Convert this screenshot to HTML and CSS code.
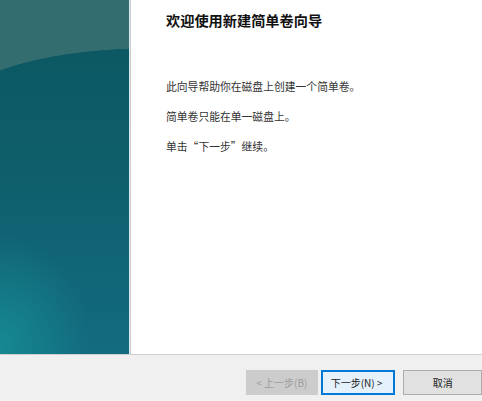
FILE: index.html
```html
<!DOCTYPE html>
<html lang="zh-CN">
<head>
    <meta charset="UTF-8">
    <title>新建简单卷向导</title>
    <link rel="stylesheet" href="styles.css">
</head>
<body>
    <div class="wizard">
        <div class="main">
            <!-- 左侧装饰图 -->
            <div class="side"></div>

            <div class="content">
                <h1>欢迎使用新建简单卷向导</h1>
                <p class="first">此向导帮助你在磁盘上创建一个简单卷。</p>
                <p>简单卷只能在单一磁盘上。</p>
                <p>单击“下一步”继续。</p>
            </div>
        </div>

        <!-- 底部按钮 -->
        <div class="footer">
            <button class="btn" disabled>&lt; 上一步(B)</button>
            <button class="btn primary">下一步(N) &gt;</button>
            <button class="btn cancel">取消</button>
        </div>
    </div>
</body>
</html>
```

FILE: styles.css
```css
body {
    margin: 0;
    font-family: "Noto Sans CJK SC", "Liberation Sans", sans-serif;
    background: #fff;
}
.wizard {
    width: 482px;
    height: 401px;
    display: flex;
    flex-direction: column;
    overflow: hidden;
}
.main {
    flex: 1;
    display: flex;
}
.side {
    width: 129px;
    border-right: 1px solid #dde9ec;
    background:
        radial-gradient(ellipse 200px 65px at 150px 113px, rgba(0, 0, 0, 0) 99%, rgba(0, 0, 0, 0) 99%, #346d70 100%) top left / 129px 113px no-repeat,
        radial-gradient(ellipse 90px 110px at 0px 345px, rgba(22, 140, 146, 0.9) 0%, rgba(22, 140, 146, 0) 100%),
        linear-gradient(180deg, #0b5660 0%, #0e5e6a 45%, #136b80 100%);
}
.content {
    flex: 1;
    border-left: 1px solid #c8ccce;
    padding-left: 35px;
}
h1 {
    margin: 12px 0 0;
    font-size: 14.2px;
    line-height: 17px;
    font-weight: bold;
    color: #111;
}
p {
    margin: 15px 0 0;
    font-size: 10.8px;
    line-height: 15px;
    color: #333;
}
p.first {
    margin-top: 50px;
}
.footer {
    height: 47px;
    border-top: 1px solid #cfcfcf;
    background: #f0f0f0;
    display: flex;
    align-items: flex-start;
    padding: 15px 0 0 246px;
    box-sizing: border-box;
    gap: 3px;
}
.btn {
    height: 25px;
    width: 73px;
    padding: 0;
    font-family: inherit;
    font-size: 10px;
    color: #222;
    background: #e1e1e1;
    border: 1px solid #adadad;
}
.btn:disabled {
    background: #cccccc;
    border-color: #cccccc;
    color: #9c9c9c;
}
.primary {
    width: 76px;
    border: 2px solid #0078d7;
    background: #e5f1fb;
    text-align: left;
    padding-left: 8px;
}
.cancel {
    margin-left: 5px;
    width: 80px;
}
```
